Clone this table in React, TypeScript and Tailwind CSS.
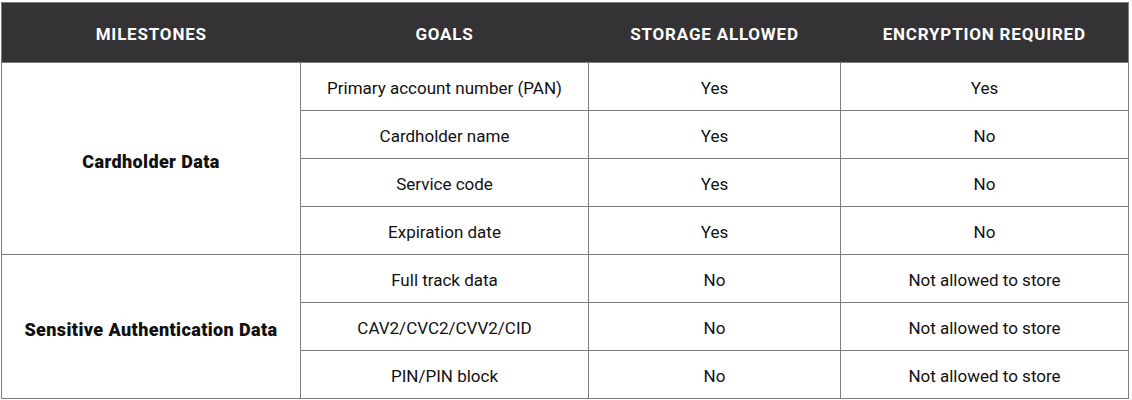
import React from "react";

type Row = { goal: string; storage: string; encryption: string };

const groups: { name: string; rows: Row[] }[] = [
  {
    name: "Cardholder Data",
    rows: [
      { goal: "Primary account number (PAN)", storage: "Yes", encryption: "Yes" },
      { goal: "Cardholder name", storage: "Yes", encryption: "No" },
      { goal: "Service code", storage: "Yes", encryption: "No" },
      { goal: "Expiration date", storage: "Yes", encryption: "No" },
    ],
  },
  {
    name: "Sensitive Authentication Data",
    rows: [
      { goal: "Full track data", storage: "No", encryption: "Not allowed to store" },
      { goal: "CAV2/CVC2/CVV2/CID", storage: "No", encryption: "Not allowed to store" },
      { goal: "PIN/PIN block", storage: "No", encryption: "Not allowed to store" },
    ],
  },
];

const cell = "h-[48px] border border-[#7d7d7d] pt-[5px] text-center align-middle text-[17px] text-[#111]";

export default function App() {
  return (
    <div className="bg-white pt-[2px] pl-[1px] pr-[3px]" style={{ fontFamily: "Roboto, 'Liberation Sans', sans-serif" }}>
      <table className="w-full table-fixed border-collapse border border-[#7d7d7d]">
        <colgroup>
          <col className="w-[299px]" />
          <col className="w-[288px]" />
          <col className="w-[252px]" />
          <col />
        </colgroup>
        <thead>
          <tr className="h-[60px] bg-[#343234] text-[17px] font-black uppercase tracking-[0.8px] text-white">
            <th className="pt-[5px] text-center">Milestones</th>
            <th className="pt-[5px] text-center">Goals</th>
            <th className="pt-[5px] text-center">Storage Allowed</th>
            <th className="pt-[5px] text-center">Encryption Required</th>
          </tr>
        </thead>
        <tbody>
          {groups.map((g) =>
            g.rows.map((r, i) => (
              <tr key={g.name + r.goal}>
                {i === 0 ? (
                  <td rowSpan={g.rows.length} className={cell + " text-[18px] font-black tracking-[0.4px]"}>
                    {g.name}
                  </td>
                ) : null}
                <td className={cell}>{r.goal}</td>
                <td className={cell}>{r.storage}</td>
                <td className={cell}>{r.encryption}</td>
              </tr>
            )),
          )}
        </tbody>
      </table>
    </div>
  );
}
